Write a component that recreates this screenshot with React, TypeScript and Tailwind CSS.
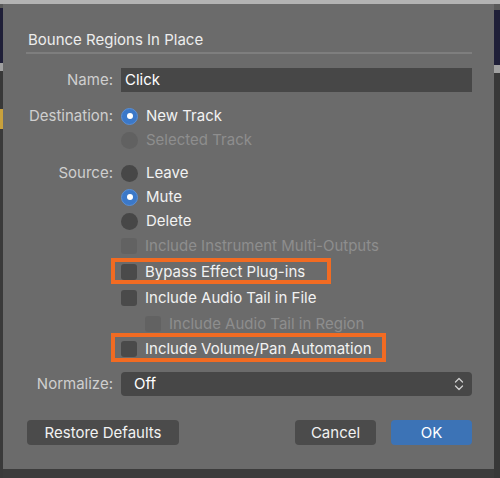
import React from 'react';

const font = { fontFamily: 'Inter, "Noto Sans", sans-serif' };

const Radio: React.FC<{ checked?: boolean; disabled?: boolean; label: string }> = ({ checked, disabled, label }) => (
  <div className="flex items-center gap-[8px]">
    {checked ? (
      <span className="w-[17px] h-[17px] rounded-full bg-[#3b78c8] border border-[#5b8fd4] flex items-center justify-center">
        <span className="w-[6px] h-[6px] rounded-full bg-white" />
      </span>
    ) : (
      <span className={`w-[17px] h-[17px] rounded-full ${disabled ? 'bg-[#616161]' : 'bg-[#474747]'}`} />
    )}
    <span className={disabled ? 'text-[#8e8e8e]' : 'text-[#f2f2f2]'}>{label}</span>
  </div>
);

const Check: React.FC<{ disabled?: boolean; label: string }> = ({ disabled, label }) => (
  <div className="flex items-center gap-[8px]">
    <span className={`w-[16px] h-[16px] rounded-[3px] ${disabled ? 'bg-[#626262]' : 'bg-[#4a4a4a]'}`} />
    <span className={disabled ? 'text-[#8e8e8e]' : 'text-[#f2f2f2]'}>{label}</span>
  </div>
);

const Label: React.FC<{ text?: string }> = ({ text }) => (
  <div className="w-[118px] pr-[8px] text-right text-[#cfcfcf] shrink-0">{text}</div>
);

const App: React.FC = () => {
  return (
    <div className="w-[500px] h-[478px] bg-[#3c3c3c] flex flex-col overflow-hidden" style={font}>
      {/* window behind the sheet */}
      <div className="h-[4px] bg-[#b3b3b3] shrink-0" />
      <div className="flex flex-1">
        <div className="w-[3px] flex flex-col">
          <div className="h-[4px] bg-[#5a5a5a]" />
          <div className="h-[55px] bg-[#1f1f38]" />
          <div className="h-[8px] bg-[#a0a0a0]" />
          <div className="h-[38px] bg-[#383838]" />
          <div className="h-[20px] bg-[#c9a13c]" />
          <div className="flex-1 bg-[#3a3a3a]" />
        </div>

        <div className="w-[491px] h-[465px] bg-[#6b6b6b] text-[15px] leading-[20px] flex flex-col pl-[23px] pr-[22px]">
          <div className="pt-[26px] pb-[2px] text-[#ededed] pl-[2px]">Bounce Regions In Place</div>
          <div className="h-[2px] bg-[#7e7e7e]" />

          <div className="flex flex-col mt-[14px] -ml-[23px]">
            <div className="flex items-center h-[24px]">
              <Label text="Name:" />
              <div className="flex-1 h-[24px] bg-[#474747] text-white pl-[4px] flex items-center">Click</div>
            </div>

            <div className="flex items-center h-[24px] mt-[12px]">
              <Label text="Destination:" />
              <Radio checked label="New Track" />
            </div>
            <div className="flex items-center h-[24px]">
              <Label />
              <Radio disabled label="Selected Track" />
            </div>

            <div className="flex items-center h-[24px] mt-[9px]">
              <Label text="Source:" />
              <Radio label="Leave" />
            </div>
            <div className="flex items-center h-[24px]">
              <Label />
              <Radio checked label="Mute" />
            </div>
            <div className="flex items-center h-[24px]">
              <Label />
              <Radio label="Delete" />
            </div>

            <div className="flex items-center h-[26px]">
              <Label />
              <Check disabled label="Include Instrument Multi-Outputs" />
            </div>
            <div className="flex items-center h-[26px]">
              <Label />
              <div className="relative">
                <Check label="Bypass Effect Plug-ins" />
                <div className="absolute -left-[10px] -top-[4px] w-[220px] h-[26px] border-[4px] border-[#f26b22]" />
              </div>
            </div>
            <div className="flex items-center h-[26px]">
              <Label />
              <Check label="Include Audio Tail in File" />
            </div>
            <div className="flex items-center h-[25px]">
              <Label />
              <div className="pl-[24px]">
                <Check disabled label="Include Audio Tail in Region" />
              </div>
            </div>
            <div className="flex items-center h-[25px]">
              <Label />
              <div className="relative">
                <Check label="Include Volume/Pan Automation" />
                <div className="absolute -left-[10px] -top-[6px] w-[275px] h-[29px] border-[4px] border-[#f26b22]" />
              </div>
            </div>

            <div className="flex items-center h-[24px] mt-[11px]">
              <Label text="Normalize:" />
              <div className="flex-1 h-[24px] bg-[#474747] rounded-[4px] text-white pl-[13px] pr-[8px] flex items-center justify-between">
                <span>Off</span>
                <svg width="10" height="16" viewBox="0 0 10 16" fill="none" stroke="#cfcfcf" strokeWidth="1.3" strokeLinecap="round" strokeLinejoin="round">
                  <path d="M1.5 6 L5 2.5 L8.5 6" />
                  <path d="M1.5 10 L5 13.5 L8.5 10" />
                </svg>
              </div>
            </div>
          </div>

          <div className="flex items-center mt-[24px] pl-[1px]">
            <button className="w-[152px] h-[25px] rounded-[4px] bg-[#4b4b4b] text-[#f2f2f2]">Restore Defaults</button>
            <div className="flex-1" />
            <button className="w-[81px] h-[25px] rounded-[4px] bg-[#4b4b4b] text-[#f2f2f2]">Cancel</button>
            <button className="w-[81px] h-[25px] rounded-[4px] bg-[#3c73b6] text-white ml-[15px]">OK</button>
          </div>
        </div>

        <div className="flex-1 flex flex-col">
          <div className="h-[6px] bg-[#5a5a5a]" />
          <div className="h-[55px] bg-[#1f1f38]" />
          <div className="h-[8px] bg-[#a0a0a0]" />
          <div className="flex-1 bg-[#383838]" />
        </div>
      </div>
    </div>
  );
};

export default App;
